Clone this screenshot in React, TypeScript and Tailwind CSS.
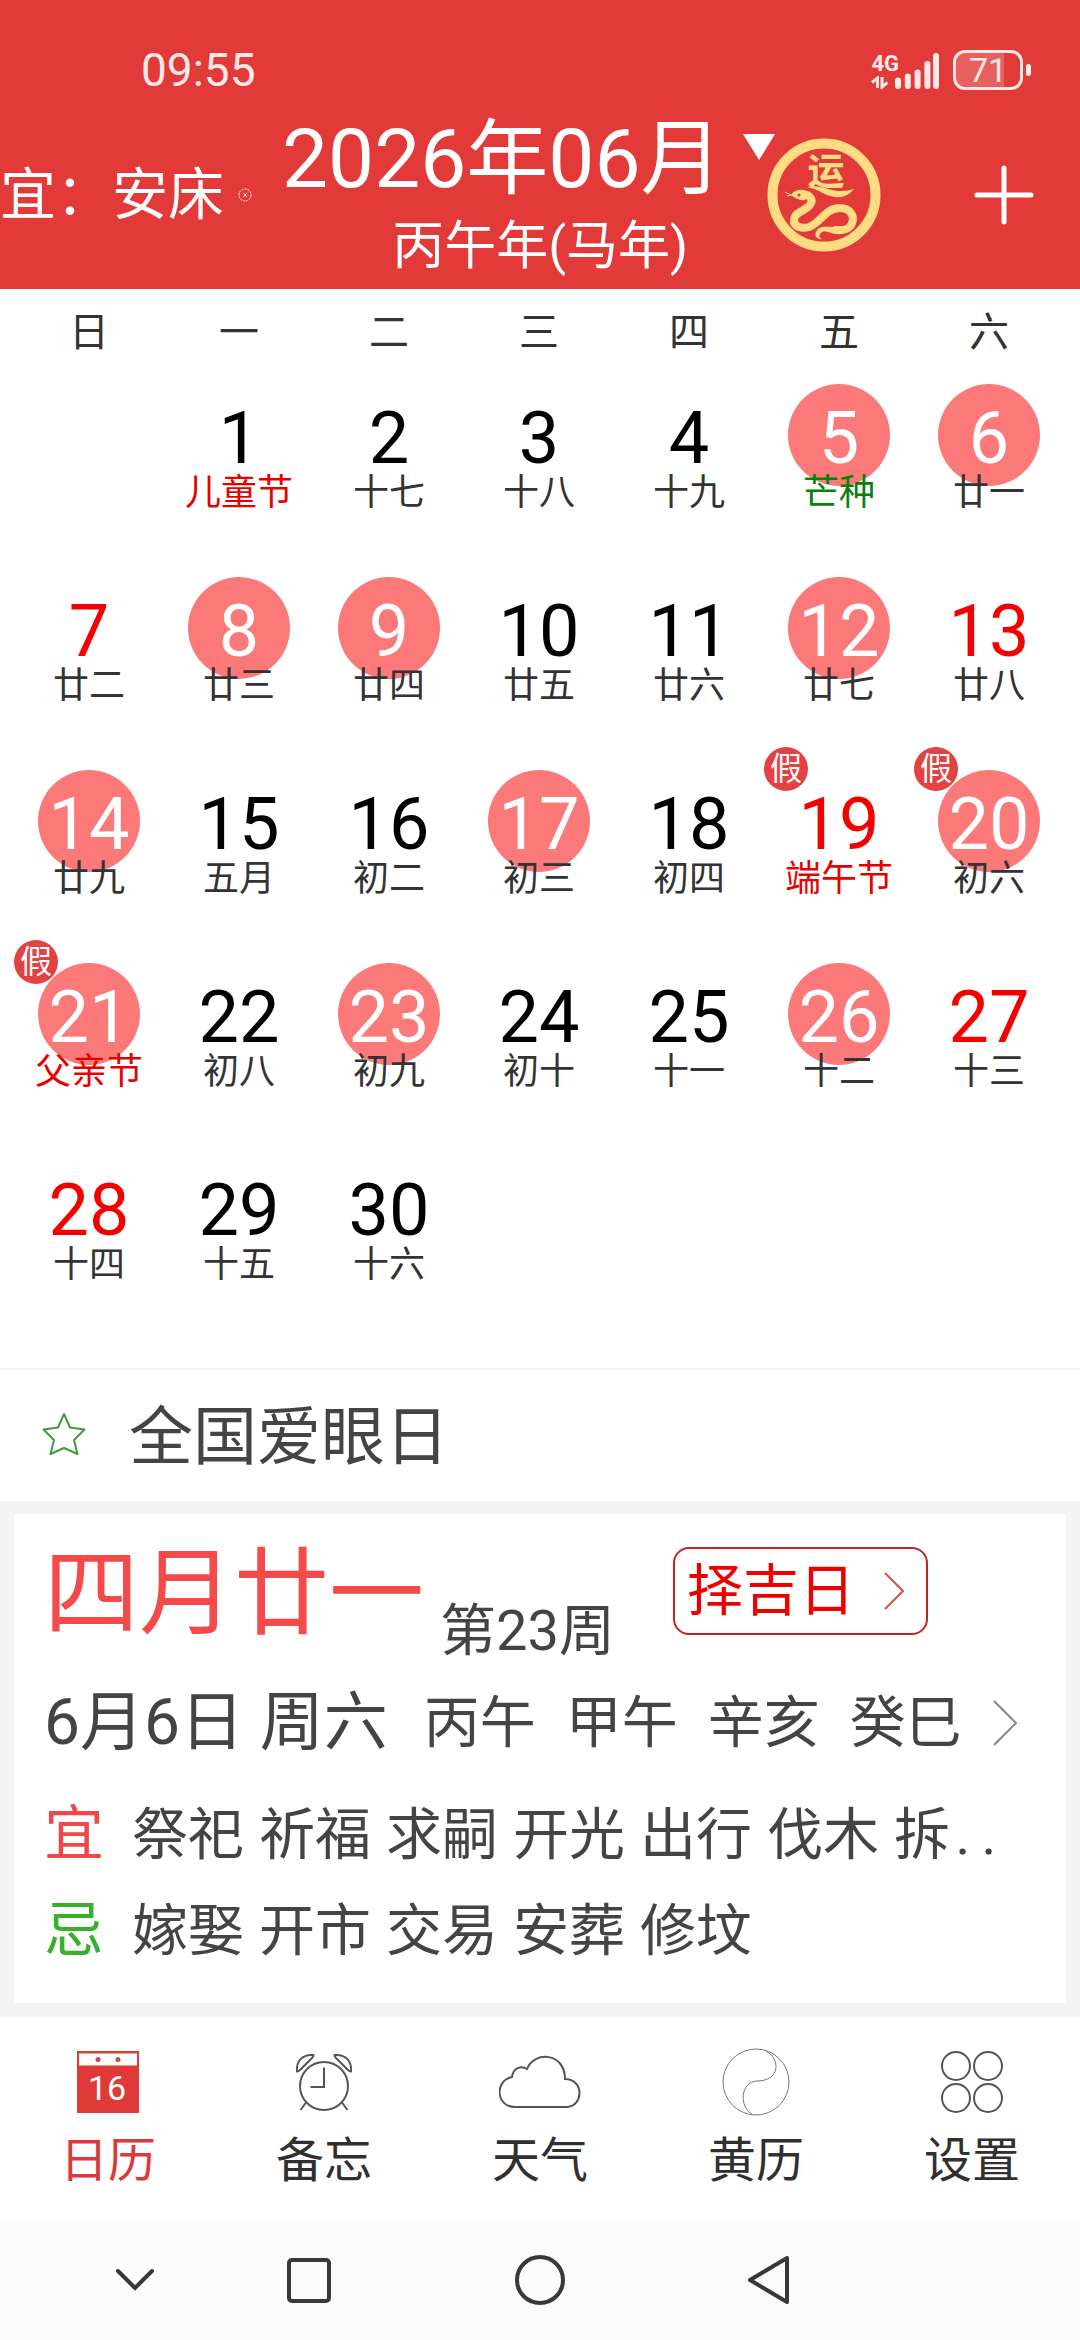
import clsx from 'clsx'

type Day = {
  day: number
  lunar: string
  circled?: boolean
  weekend?: boolean
  holiday?: boolean
  tone?: 'festival' | 'term'
}

const weekdays = ['日', '一', '二', '三', '四', '五', '六']

const weeks: (Day | null)[][] = [
  [
    null,
    { day: 1, lunar: '儿童节', tone: 'festival' },
    { day: 2, lunar: '十七' },
    { day: 3, lunar: '十八' },
    { day: 4, lunar: '十九' },
    { day: 5, lunar: '芒种', circled: true, tone: 'term' },
    { day: 6, lunar: '廿一', circled: true },
  ],
  [
    { day: 7, lunar: '廿二', weekend: true },
    { day: 8, lunar: '廿三', circled: true },
    { day: 9, lunar: '廿四', circled: true },
    { day: 10, lunar: '廿五' },
    { day: 11, lunar: '廿六' },
    { day: 12, lunar: '廿七', circled: true },
    { day: 13, lunar: '廿八', weekend: true },
  ],
  [
    { day: 14, lunar: '廿九', circled: true },
    { day: 15, lunar: '五月' },
    { day: 16, lunar: '初二' },
    { day: 17, lunar: '初三', circled: true },
    { day: 18, lunar: '初四' },
    { day: 19, lunar: '端午节', weekend: true, holiday: true, tone: 'festival' },
    { day: 20, lunar: '初六', circled: true, holiday: true },
  ],
  [
    { day: 21, lunar: '父亲节', circled: true, holiday: true, tone: 'festival' },
    { day: 22, lunar: '初八' },
    { day: 23, lunar: '初九', circled: true },
    { day: 24, lunar: '初十' },
    { day: 25, lunar: '十一' },
    { day: 26, lunar: '十二', circled: true },
    { day: 27, lunar: '十三', weekend: true },
  ],
  [
    { day: 28, lunar: '十四', weekend: true },
    { day: 29, lunar: '十五' },
    { day: 30, lunar: '十六' },
    null,
    null,
    null,
    null,
  ],
]

const pillars = ['丙午', '甲午', '辛亥', '癸巳']
const suitable = ['祭祀', '祈福', '求嗣', '开光', '出行', '伐木']
const avoid = ['嫁娶', '开市', '交易', '安葬', '修坟']

function StatusBar() {
  return (
    <div className="flex h-[100px] items-center justify-between pt-10 pr-[49px] pl-[141px] text-[#ffe9e7]">
      <span className="text-[46px] leading-[46px]">09:55</span>
      <div className="flex items-center gap-[14px]">
        <div className="flex items-end">
          <div className="flex flex-col">
            <span className="text-[22px] leading-6 font-bold">4G</span>
            <svg width="18" height="13" viewBox="0 0 18 13" fill="none" stroke="currentColor" strokeWidth="3">
              <path d="M6.500 12V2L1 6.500M11 1v10l5.500-4.500" />
            </svg>
          </div>
          <svg width="44" height="37" viewBox="0 0 44 37" stroke="currentColor" strokeWidth="6" strokeLinecap="round" className="-ml-1">
            <path d="M3 28.500V34M12.800 24.500V34M22.600 20.500V34M32.400 12V34M41 4V34" />
          </svg>
        </div>
        <div className="flex items-center gap-[3px]">
          <div className="relative flex h-10 w-[70px] items-center justify-center overflow-hidden rounded-xl border-[3px] border-current">
            <span className="absolute inset-y-0 left-0 w-[75%] bg-white/20" />
            <span className="relative text-[34px] leading-[34px]">71</span>
          </div>
          <span className="h-3 w-[5px] rounded-sm bg-current" />
        </div>
      </div>
    </div>
  )
}

function FortuneBadge() {
  return (
    <svg width="114" height="114" viewBox="0 0 114 114" fill="none">
      <circle cx="57" cy="57" r="51.500" stroke="#fddc84" strokeWidth="10" />
      <text x="59" y="47" textAnchor="middle" fontSize="37" fontWeight="700" fill="#fddc84">运</text>
      <path d="M40 49c12-3 20 3 32 4 7 0 11-1 15-2-5 6-11 9-19 8-10-1-16-8-28-10z" fill="#fddc84" />
      <path d="M18 54l6 3-4 1M24 57h4" stroke="#fddc84" strokeWidth="1" />
      <path d="M24 57c3-5 12-7 17-3l-3 8c-5 1-10-2-14-5z" fill="#fddc84" />
      <path
        d="M35 57c8-1 12 5 8 10-5 6-15 7-16 14-1 8 8 10 15 8 12-4 16-19 31-19 10 0 15 8 12 15-2 6-9 8-16 7"
        stroke="#fddc84"
        strokeWidth="8"
        strokeLinecap="round"
      />
      <path d="M72 88c5 3 4 8-3 8-6 0-12-6-16 0-2 3 1 5 3 5-6 1-9-3-7-7 4-9 14-3 23-6z" fill="#fddc84" />
      <circle cx="32" cy="57" r="1.500" fill="#e23a38" />
    </svg>
  )
}

function Header() {
  return (
    <header className="bg-[#e23a38] text-white">
      <StatusBar />
      <div className="flex h-[189px] items-center">
        <p className="text-[56px] leading-[56px] whitespace-nowrap">宜：安床</p>
        <button aria-label="关闭" className="ml-[14px]">
          <svg width="14" height="14" viewBox="0 0 14 14" fill="none" stroke="currentColor">
            <circle cx="7" cy="7" r="6" strokeDasharray="2 1" />
            <path d="M5 5l4 4M9 5l-4 4" />
          </svg>
        </button>
        <div className="ml-[30px] flex flex-col items-center gap-5 whitespace-nowrap">
          <button className="flex items-center gap-5">
            <h1 className="text-[82px] leading-[84px]">2026年06月</h1>
            <svg width="32" height="26" viewBox="0 0 32 26" fill="currentColor" className="mb-6">
              <path d="M0 0h32L16 26z" />
            </svg>
          </button>
          <p className="pl-6 text-[52px] leading-[52px]">丙午年(马年)</p>
        </div>
        <button aria-label="运势" className="-ml-2">
          <FortuneBadge />
        </button>
        <button aria-label="添加" className="mr-[46px] ml-auto">
          <svg width="60" height="60" viewBox="0 0 60 60" stroke="currentColor" strokeWidth="5" strokeLinecap="round">
            <path d="M30 3v54M3 30h54" />
          </svg>
        </button>
      </div>
    </header>
  )
}

function DayCell({ item }: { item: Day }) {
  return (
    <button className="relative flex h-[193px] w-full flex-col items-center gap-1.5 pt-8">
      {item.circled && (
        <span className="absolute top-[7px] left-1/2 size-[102px] -translate-x-1/2 rounded-full bg-[#fb7979]" />
      )}
      <span
        className={clsx(
          'relative text-[72px] leading-[60px]',
          item.circled ? 'text-white' : item.weekend ? 'text-[#f50000]' : 'text-black',
        )}
      >
        {item.day}
      </span>
      <span
        className={clsx(
          'relative text-[36px] leading-9 whitespace-nowrap',
          item.tone === 'festival' && 'text-[#e60000]',
          item.tone === 'term' && 'text-[#0a800a]',
          !item.tone && 'text-[#333333]',
        )}
      >
        {item.lunar}
      </span>
      {item.holiday && (
        <span className="absolute -top-4 left-0 flex size-11 items-center justify-center rounded-full bg-[#e24242] text-[32px] leading-8 text-white">
          假
        </span>
      )}
    </button>
  )
}

function MonthTable() {
  return (
    <section className="border-b-2 border-[#f4f4f4] pr-4 pb-[26px] pl-[14px]">
      <table className="w-full table-fixed">
        <thead>
          <tr className="h-[88px]">
            {weekdays.map((name) => (
              <th key={name} className="p-0 text-[40px] leading-10 font-normal text-[#333333]">
                {name}
              </th>
            ))}
          </tr>
        </thead>
        <tbody>
          {weeks.map((week, row) => (
            <tr key={row}>
              {week.map((item, col) => (
                <td key={col} className="p-0">
                  {item && <DayCell item={item} />}
                </td>
              ))}
            </tr>
          ))}
        </tbody>
      </table>
    </section>
  )
}

function DetailCard() {
  return (
    <section className="bg-[#f4f4f4] p-[14px] pt-[13px]">
      <div className="h-[489px] bg-white pr-12 pl-[30px] text-[56px] leading-[56px] whitespace-nowrap text-[#444444]">
        <div className="flex items-start pt-[33px]">
          <h2 className="text-[95px] leading-[96px] text-[#f54a4a]">四月廿一</h2>
          <span className="mt-[56px] ml-4">第23周</span>
          <button className="ml-[58px] flex h-[88px] w-[255px] items-center justify-between rounded-2xl border-2 border-[#c8202a] pr-[22px] pl-3 text-[#ee0000]">
            择吉日
            <svg width="20" height="38" viewBox="0 0 20 38" fill="none" stroke="#cf5348" strokeWidth="2">
              <path d="M1 1l18 18L1 37" />
            </svg>
          </button>
        </div>
        <div className="mt-4 flex h-[96px] items-center">
          <span className="text-[64px] leading-[64px]">6月6日 周六</span>
          <ul className="ml-9 flex gap-[30px]">
            {pillars.map((name) => (
              <li key={name}>{name}</li>
            ))}
          </ul>
          <button aria-label="详情" className="ml-auto">
            <svg width="26" height="46" viewBox="0 0 26 46" fill="none" stroke="#888888" strokeWidth="2">
              <path d="M2 1l22 22L2 45" />
            </svg>
          </button>
        </div>
        <dl className="mt-4 grid grid-cols-[88px_1fr] text-[56px] leading-[96px]">
          <dt className="text-[60px] text-[#f04848]">宜</dt>
          <dd className="flex gap-[15px]">
            {suitable.map((name) => (
              <span key={name}>{name}</span>
            ))}
            <span>
              拆<span className="inline-block w-[26px] text-center">.</span>
              <span className="inline-block w-[26px] text-center">.</span>
            </span>
          </dd>
          <dt className="text-[60px] text-[#38b02c]">忌</dt>
          <dd className="flex gap-[15px]">
            {avoid.map((name) => (
              <span key={name}>{name}</span>
            ))}
          </dd>
        </dl>
      </div>
    </section>
  )
}

function CalendarIcon() {
  return (
    <svg width="62" height="62" viewBox="0 0 62 62">
      <rect width="62" height="62" fill="#e03a38" />
      <rect x="2" y="2.500" width="58" height="12" fill="#fff" />
      <circle cx="21" cy="8.500" r="2.500" fill="#d04848" />
      <circle cx="41" cy="8.500" r="2.500" fill="#d04848" />
      <text x="30" y="49" textAnchor="middle" fontSize="34" fill="#fff">16</text>
    </svg>
  )
}

function AlarmIcon() {
  return (
    <svg width="58" height="58" viewBox="0 0 58 58" fill="none" stroke="#555555" strokeWidth="2">
      <circle cx="29" cy="33" r="24" />
      <path d="M29 14.500V34H15.500" />
      <path d="M2 18.500c-1-10 5-17.500 16.500-16.500 0 1-.5 2-1.500 3L5 17c-1 1-2 1.500-3 1.500zM56 18.500c1-10-5-17.500-16.500-16.500 0 1 .5 2 1.500 3l12 12c1 1 2 1.500 3 1.500z" />
      <path d="M11 49.500L5.500 57M47 49.500l5.500 7.500" />
    </svg>
  )
}

function CloudIcon() {
  return (
    <svg width="82" height="54" viewBox="0 0 82 54" fill="none" stroke="#555555" strokeWidth="2">
      <path d="M16 52C-3 52-5 26 13 22c1-9 9-12 15-8C35-4 66-3 66 24c19 0 19 27 2 28z" />
    </svg>
  )
}

function YinYangIcon() {
  return (
    <svg width="68" height="68" viewBox="0 0 68 68" fill="none" stroke="#777777">
      <circle cx="34" cy="34" r="33" />
      <path d="M44 3c15 8 14 30-9 30-17 1-18 26-5 33" />
    </svg>
  )
}

function SettingsIcon() {
  return (
    <svg width="62" height="62" viewBox="0 0 62 62" fill="none" stroke="#555555" strokeWidth="2">
      <circle cx="15" cy="15" r="14" />
      <circle cx="47" cy="15" r="14" />
      <circle cx="15" cy="47" r="14" />
      <circle cx="47" cy="47" r="14" />
    </svg>
  )
}

const tabs = [
  { label: '日历', icon: CalendarIcon, active: true },
  { label: '备忘', icon: AlarmIcon },
  { label: '天气', icon: CloudIcon },
  { label: '黄历', icon: YinYangIcon },
  { label: '设置', icon: SettingsIcon },
]

function TabBar() {
  return (
    <nav className="grid h-[202px] grid-cols-5 bg-white">
      {tabs.map((tab) => (
        <button key={tab.label} className="flex flex-col items-center pt-[30px]">
          <span className="flex h-[70px] items-center">
            <tab.icon />
          </span>
          <span className={clsx('mt-5 text-[48px] leading-[48px]', tab.active ? 'text-[#db3a3c]' : 'text-[#303030]')}>
            {tab.label}
          </span>
        </button>
      ))}
    </nav>
  )
}

function SystemNav() {
  return (
    <nav className="grid h-[121px] grid-cols-[270fr_78fr_384fr_74fr_274fr] place-items-center bg-[#fbfbfb] text-[#383838]">
      <button aria-label="收起">
        <svg width="40" height="24" viewBox="0 0 40 24" fill="none" stroke="currentColor" strokeWidth="4" strokeLinecap="round">
          <path d="M3 3l17 17L37 3" />
        </svg>
      </button>
      <button aria-label="最近任务">
        <svg width="46" height="46" viewBox="0 0 46 46" fill="none" stroke="currentColor" strokeWidth="4">
          <rect x="3" y="3" width="40" height="41" rx="3" />
        </svg>
      </button>
      <button aria-label="主页">
        <svg width="52" height="52" viewBox="0 0 52 52" fill="none" stroke="currentColor" strokeWidth="4">
          <circle cx="26" cy="26" r="23" />
        </svg>
      </button>
      <button aria-label="返回">
        <svg width="44" height="52" viewBox="0 0 44 52" fill="none" stroke="currentColor" strokeWidth="4" strokeLinejoin="round">
          <path d="M3 26L40 4v44z" />
        </svg>
      </button>
    </nav>
  )
}

export default function App() {
  return (
    <div className="min-h-screen w-full overflow-x-hidden bg-white font-[Roboto,'Noto_Sans_CJK_SC',sans-serif]">
      <Header />
      <main>
        <MonthTable />
        <section className="flex h-[131px] items-center bg-white pl-[42px]">
          <svg width="44" height="44" viewBox="0 0 44 44" fill="none" stroke="#3c9c40" strokeWidth="2" strokeLinejoin="round" className="mb-1">
            <path d="M22 2l6 13.500 14.500 2L32 28l3.500 14L22 36 8.500 42 12 28 1.500 17.500l14.500-2z" />
          </svg>
          <span className="mt-1 ml-[43px] text-[64px] leading-[64px] text-[#444444]">全国爱眼日</span>
        </section>
        <DetailCard />
      </main>
      <TabBar />
      <SystemNav />
    </div>
  )
}
